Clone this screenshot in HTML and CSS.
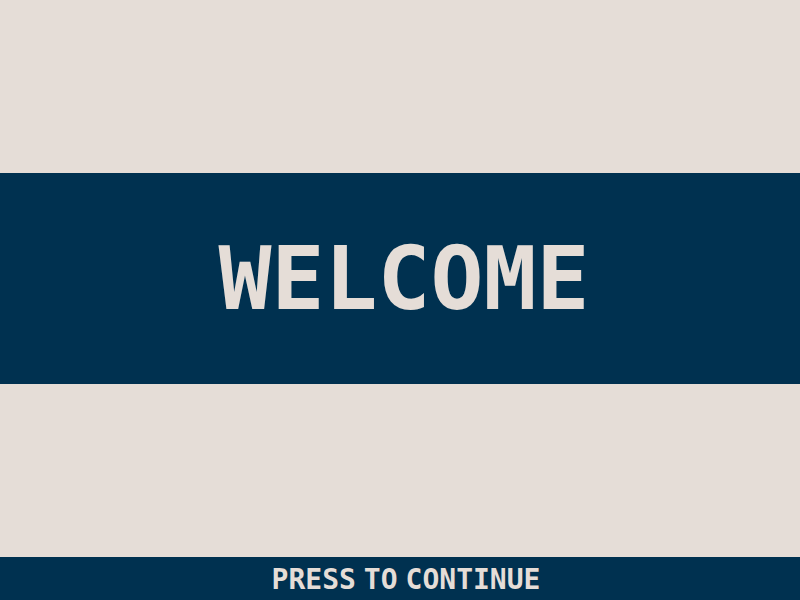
FILE: index.html
```html
<!DOCTYPE html>
<html lang="en">
<head>
<meta charset="utf-8">
<meta name="viewport" content="width=device-width, initial-scale=1">
<title>Welcome</title>
<link rel="stylesheet" href="styles.css">
</head>
<body>
<main class="stage">
  <header class="banner">
    <h1 class="title">WELCOME</h1>
  </header>
</main>
<button class="continue" type="button">
  <span>PRESS</span>
  <span>TO</span>
  <span>CONTINUE</span>
</button>
</body>
</html>
```

FILE: styles.css
```css
:root {
  --paper: #e5ddd7;
  --navy: #003150;
}

* {
  box-sizing: border-box;
}

body {
  margin: 0;
  min-height: 100vh;
  display: flex;
  flex-direction: column;
  background: var(--paper);
  font-family: "DejaVu Sans Mono", monospace;
  font-weight: 700;
}

.stage {
  flex: 1;
  display: flex;
  flex-direction: column;
  justify-content: center;
}

.banner {
  padding: 54px 0;
  background: var(--navy);
  color: var(--paper);
  text-align: center;
}

.title {
  margin: 0;
  padding-left: 8px;
  font-size: 88px;
  line-height: 103px;
}

.continue {
  display: flex;
  justify-content: center;
  gap: 8px;
  width: 100%;
  padding: 5px 0 3px 12px;
  border: 0;
  background: var(--navy);
  color: var(--paper);
  font: inherit;
  font-size: 28px;
  line-height: 35px;
  cursor: pointer;
}
```
